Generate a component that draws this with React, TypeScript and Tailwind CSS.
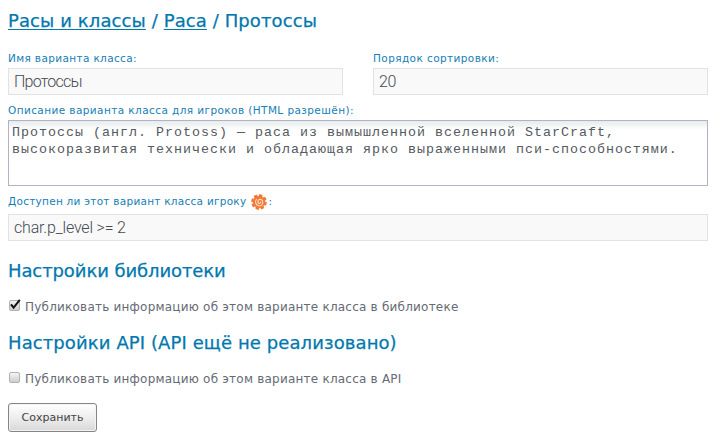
import React from "react";

const heading =
  "font-['DejaVu_Sans',sans-serif] text-[18px] leading-[22px] whitespace-nowrap text-[#0078ae] [-webkit-text-stroke:0.25px_#0078ae]";
const label =
  "block font-['DejaVu_Sans',sans-serif] text-[10.5px] leading-[14px] whitespace-nowrap text-[#1680b6]";
const field =
  "block h-[27px] w-full border border-[#e2e2e2] bg-[#f9f9f9] px-[5px] font-['Roboto',sans-serif] font-light text-[16px] text-[#454950] outline-none";

function GearIcon() {
  return (
    <svg width="16" height="16" viewBox="0 0 16 16" className="mr-px ml-[5px] shrink-0">
      <g fill="#f37a36">
        <circle cx="8" cy="8" r="6" />
        {[15, 60, 105, 150, 195, 240, 285, 330].map((a) => (
          <path key={a} d="M6 3 6.4.2H9.6L10 3Z" transform={`rotate(${a} 8 8)`} />
        ))}
      </g>
      <path
        d="M5.6 5C3.9 7 4.3 10.6 6.9 11.6s5-.5 4.9-3.3C11.8 5.8 9.7 4.9 8.3 5.6S6.4 8.6 7.6 9.3s2.3-.5 1.7-1.8"
        fill="none"
        stroke="#fde0cd"
        strokeWidth="1.1"
      />
    </svg>
  );
}

function Check({ checked, children }: { checked?: boolean; children: React.ReactNode }) {
  return (
    <div className="flex h-[18px] items-center">
      <svg width="14" height="16" viewBox="0 0 14 16" className="-mt-[5px] mr-[3px] shrink-0">
        <defs>
          <linearGradient id="box" x2="0" y2="1">
            <stop stopColor="#f6f6f6" />
            <stop offset="1" stopColor="#cccccc" />
          </linearGradient>
        </defs>
        <rect x="1.5" y="3.5" width="10" height="10" rx="1.5" fill="url(#box)" stroke="#b2b2b2" />
        {checked && <path d="M3 7.3 5.6 10.7 11.8 2.8" fill="none" stroke="#111" strokeWidth="2" />}
      </svg>
      <span className="font-['DejaVu_Sans',sans-serif] text-[12px] leading-[18px] tracking-[0.22px] whitespace-nowrap text-[#666a73]">
        {children}
      </span>
    </div>
  );
}

export default function App() {
  return (
    <form className="h-[446px] w-[720px] overflow-hidden bg-white px-2 pt-[10px]">
      <h1 className={heading + " tracking-[0.1px]"}>
        <a className="underline decoration-1 underline-offset-2">Расы и классы</a> /{" "}
        <a className="underline decoration-1 underline-offset-2">Раса</a> / Протоссы
      </h1>
      <div className="mt-[19px] grid w-[700px] grid-cols-2 gap-[30px]">
        <label className={label + " tracking-[0.36px]"}>
          Имя варианта класса:
          <input className={field + " mt-[3px] tracking-[-0.75px]"} defaultValue="Протоссы" />
        </label>
        <label className={label + " tracking-[0.41px]"}>
          Порядок сортировки:
          <input className={field + " mt-[3px] tracking-[-0.5px]"} defaultValue="20" />
        </label>
      </div>
      <label className={label + " mt-2 tracking-[0.41px]"}>
        Описание варианта класса для игроков (HTML разрешён):
      </label>
      <div className="mt-[3px] h-[66px] w-[700px] border border-[#b2b2c4] bg-linear-to-b from-[#e6ebeb] to-white to-[9px] px-[3px] pt-[3px] font-['Liberation_Mono',monospace] text-[13.33px] leading-[17px] tracking-[1px] whitespace-nowrap text-[#555960]">
        Протоссы (англ. Protoss) — раса из вымышленной вселенной StarCraft,
        <br />
        высокоразвитая технически и обладающая ярко выраженными пси-способностями.
      </div>
      <div className="mt-2 flex h-4 w-[700px] items-center">
        <span className={label + " -mt-[2px] tracking-[0.26px]"}>Доступен ли этот вариант класса игроку</span>
        <GearIcon />
        <span className={label + " -mt-[2px]"}>:</span>
      </div>
      <input className={field + " mt-1 max-w-[700px] tracking-[-0.17px]"} defaultValue="char.p_level >= 2" />
      <h2 className={heading + " mt-[19px] tracking-[-0.1px]"}>Настройки библиотеки</h2>
      <div className="mt-4">
        <Check checked>Публиковать информацию об этом варианте класса в библиотеке</Check>
      </div>
      <h2 className={heading + " mt-4 tracking-[0.1px]"}>Настройки API (API ещё не реализовано)</h2>
      <div className="mt-4">
        <Check>Публиковать информацию об этом варианте класса в API</Check>
      </div>
      <button
        type="button"
        className="mt-[15px] block h-[29px] w-[89px] rounded-[3px] border border-[#858585] bg-linear-to-b from-white via-[#eeeeee] via-50% to-[#d8d8d8] pt-[2px] font-['DejaVu_Sans',sans-serif] text-[11px] text-[#444] shadow-[inset_0_0_0_1px_#f3f3f3]"
      >
        Сохранить
      </button>
    </form>
  );
}
